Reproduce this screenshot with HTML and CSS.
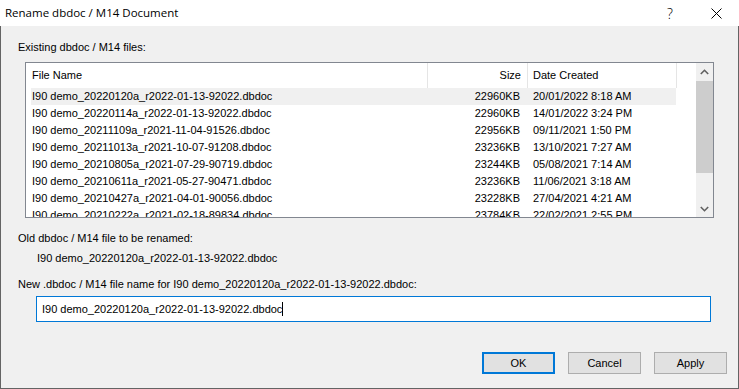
FILE: index.html
```html
<!DOCTYPE html>
<html>
<head>
<meta charset="utf-8">
<link rel="stylesheet" href="styles.css">
</head>
<body>
<div class="window">
  <div class="titlebar">
    <span class="title">Rename dbdoc / M14 Document</span>
    <span class="tb-btn help">?</span>
    <span class="tb-btn close"><svg width="11" height="11" viewBox="0 0 11 11"><path d="M0.5 0.5 L10.5 10.5 M10.5 0.5 L0.5 10.5" stroke="#000" stroke-width="1" fill="none"/></svg></span>
  </div>
  <div class="client">
    <div class="label first">Existing dbdoc / M14 files:</div>
    <div class="listview">
      <div class="lv-main">
        <div class="lv-header">
          <div class="hcell hname">File Name</div>
          <div class="hcell hsize">Size</div>
          <div class="hcell hdate">Date Created</div>
        </div>
        <div class="lv-body">
          <div class="row selected"><span class="cname">I90 demo_20220120a_r2022-01-13-92022.dbdoc</span><span class="csize">22960KB</span><span class="cdate">20/01/2022 8:18 AM</span></div>
          <div class="row"><span class="cname">I90 demo_20220114a_r2022-01-13-92022.dbdoc</span><span class="csize">22960KB</span><span class="cdate">14/01/2022 3:24 PM</span></div>
          <div class="row"><span class="cname">I90 demo_20211109a_r2021-11-04-91526.dbdoc</span><span class="csize">22956KB</span><span class="cdate">09/11/2021 1:50 PM</span></div>
          <div class="row"><span class="cname">I90 demo_20211013a_r2021-10-07-91208.dbdoc</span><span class="csize">23236KB</span><span class="cdate">13/10/2021 7:27 AM</span></div>
          <div class="row"><span class="cname">I90 demo_20210805a_r2021-07-29-90719.dbdoc</span><span class="csize">23244KB</span><span class="cdate">05/08/2021 7:14 AM</span></div>
          <div class="row"><span class="cname">I90 demo_20210611a_r2021-05-27-90471.dbdoc</span><span class="csize">23236KB</span><span class="cdate">11/06/2021 3:18 AM</span></div>
          <div class="row"><span class="cname">I90 demo_20210427a_r2021-04-01-90056.dbdoc</span><span class="csize">23228KB</span><span class="cdate">27/04/2021 4:21 AM</span></div>
          <div class="row"><span class="cname">I90 demo_20210222a_r2021-02-18-89834.dbdoc</span><span class="csize">23784KB</span><span class="cdate">22/02/2021 2:55 PM</span></div>
        </div>
      </div>
      <div class="scrollbar">
        <div class="sb-arrow"><svg width="9" height="6" viewBox="0 0 9 6"><path d="M0.8 5 L4.5 1.3 L8.2 5" stroke="#606060" stroke-width="1.6" fill="none"/></svg></div>
        <div class="sb-track"><div class="sb-thumb"></div></div>
        <div class="sb-arrow"><svg width="9" height="6" viewBox="0 0 9 6"><path d="M0.8 1 L4.5 4.7 L8.2 1" stroke="#606060" stroke-width="1.6" fill="none"/></svg></div>
      </div>
    </div>
    <div class="label old">Old dbdoc / M14 file to be renamed:</div>
    <div class="label oldname">I90 demo_20220120a_r2022-01-13-92022.dbdoc</div>
    <div class="label newlbl">New .dbdoc / M14 file name for I90 demo_20220120a_r2022-01-13-92022.dbdoc:</div>
    <div class="input"><span class="itext">I90 demo_20220120a_r2022-01-13-92022.dbdoc</span><span class="caret"></span></div>
    <div class="buttons">
      <div class="btn default">OK</div>
      <div class="btn">Cancel</div>
      <div class="btn">Apply</div>
    </div>
  </div>
</div>
</body>
</html>
```
FILE: styles.css
```css
html, body {
  margin: 0;
  padding: 0;
}
body {
  width: 739px;
  height: 389px;
  overflow: hidden;
  font-family: "Liberation Sans", Arial, sans-serif;
  font-size: 11px;
  color: #000;
}
.window {
  width: 739px;
  height: 389px;
  display: flex;
  flex-direction: column;
}
.titlebar {
  height: 26px;
  background: #fff;
  display: flex;
  align-items: center;
  flex: none;
}
.title {
  font-family: "Open Sans", "Noto Sans", sans-serif;
  font-size: 11.5px;
  padding-left: 5px;
  flex: 1;
  position: relative;
  top: -1px;
}
.tb-btn {
  width: 46px;
  height: 26px;
  display: flex;
  align-items: center;
  justify-content: center;
}
.help {
  font-family: "Open Sans", sans-serif;
  font-size: 14px;
  font-weight: 300;
}
.close svg {
  display: block;
}
.client {
  flex: 1;
  background: #f0f0f0;
  border-left: 1px solid #646464;
  border-right: 1px solid #646464;
  border-bottom: 1px solid #646464;
  display: flex;
  flex-direction: column;
}
.label {
  line-height: 13px;
  height: 13px;
  white-space: nowrap;
}
.first {
  margin: 15px 0 0 17px;
}
.listview {
  margin: 8px 0 0 24px;
  width: 687px;
  height: 154px;
  border: 1px solid #828790;
  background: #fff;
  display: flex;
}
.lv-main {
  flex: 1;
  overflow: hidden;
}
.lv-header {
  display: flex;
  height: 25px;
}
.hcell {
  border-right: 1px solid #e5e5e5;
  line-height: 25px;
  height: 25px;
  box-sizing: border-box;
  white-space: nowrap;
}
.hname {
  width: 402px;
  padding-left: 6px;
}
.hsize {
  width: 100px;
  text-align: right;
  padding-right: 6px;
}
.hdate {
  width: 149px;
  padding-left: 5px;
}
.lv-body {
  height: 129px;
  overflow: hidden;
}
.row {
  display: flex;
  height: 17px;
  line-height: 17px;
  margin-left: 5px;
  width: 645px;
  white-space: nowrap;
}
.row.selected {
  background: #f0f0f0;
}
.cname {
  width: 396px;
  padding-left: 1px;
  box-sizing: border-box;
}
.csize {
  width: 100px;
  text-align: right;
  padding-right: 7px;
  box-sizing: border-box;
}
.cdate {
  width: 149px;
  padding-left: 6px;
  box-sizing: border-box;
}
.scrollbar {
  width: 17px;
  background: #f0f0f0;
  display: flex;
  flex-direction: column;
  flex: none;
}
.sb-arrow {
  height: 17px;
  display: flex;
  align-items: center;
  justify-content: center;
  flex: none;
}
.sb-arrow svg {
  display: block;
}
.sb-track {
  flex: 1;
  padding-top: 1px;
}
.sb-thumb {
  height: 92px;
  background: #cdcdcd;
}
.old {
  margin: 14px 0 0 17px;
}
.oldname {
  margin: 7px 0 0 36px;
}
.newlbl {
  margin: 13px 0 0 17px;
}
.input {
  margin: 5px 0 0 35px;
  width: 673px;
  height: 24px;
  border: 1px solid #0078d7;
  background: #fff;
  display: flex;
  align-items: center;
  padding-left: 5px;
  box-sizing: content-box;
  width: 668px;
}
.itext {
  white-space: nowrap;
}
.caret {
  width: 1px;
  height: 14px;
  background: #000;
}
.buttons {
  display: flex;
  justify-content: flex-end;
  gap: 13px;
  margin: 30px 11px 0 0;
}
.btn {
  width: 73px;
  height: 22px;
  box-sizing: border-box;
  border: 1px solid #adadad;
  background: #e1e1e1;
  display: flex;
  align-items: center;
  justify-content: center;
}
.btn.default {
  border: 2px solid #0078d7;
}
```
